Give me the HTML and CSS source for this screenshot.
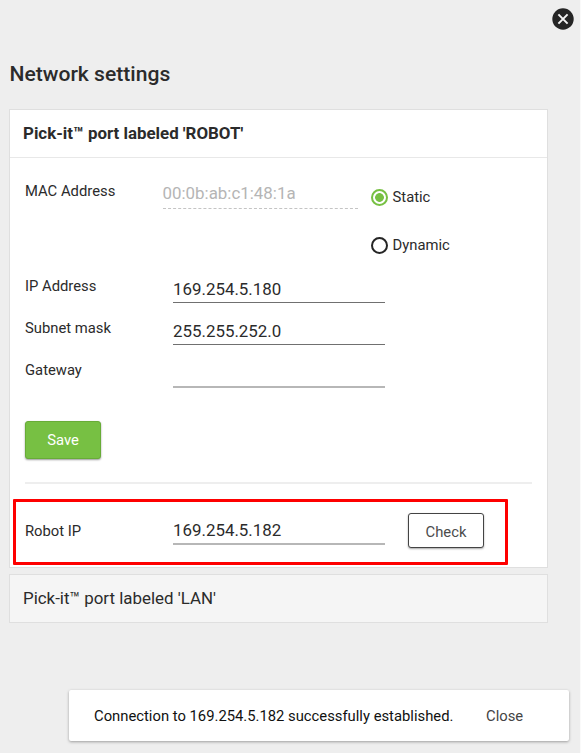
FILE: index.html
```html
<!DOCTYPE html>
<html lang="en">
<head>
<meta charset="utf-8">
<title>Network settings</title>
<link rel="stylesheet" href="styles.css">
</head>
<body>
<header class="topbar">
  <svg class="close-icon" width="22" height="22" viewBox="0 0 22 22" aria-label="Close"><circle cx="11" cy="11" r="10.7" fill="#252525"/><path d="M6.4 6.4l9.2 9.2M15.6 6.4l-9.2 9.2" stroke="#f4f4f4" stroke-width="2"/></svg>
</header>
<main class="page">
  <h1 class="title"><span>Network settings</span></h1>
  <section class="panel">
    <h2 class="panel-head"><span>Pick-it™ port labeled 'ROBOT'</span></h2>
    <div class="panel-body">
      <div class="row mac-row">
        <span class="label mac-label">MAC Address</span>
        <span class="field field-disabled">00:0b:ab:c1:48:1a</span>
        <div class="radios">
          <div class="radio"><span class="dot dot-on"></span><span>Static</span></div>
          <div class="radio"><span class="dot"></span><span>Dynamic</span></div>
        </div>
      </div>
      <div class="row"><span class="label">IP Address</span><span class="field">169.254.5.180</span></div>
      <div class="row"><span class="label">Subnet mask</span><span class="field">255.255.252.0</span></div>
      <div class="row"><span class="label">Gateway</span><span class="field field-soft"></span></div>
      <button class="btn btn-save">Save</button>
      <div class="divider"></div>
      <div class="highlight">
        <span class="label">Robot IP</span><span class="field field-robot">169.254.5.182</span>
        <button class="btn btn-check">Check</button>
      </div>
    </div>
  </section>
  <section class="panel panel-closed">
    <h2 class="panel-head"><span>Pick-it™ port labeled 'LAN'</span></h2>
  </section>
</main>
<div class="toast"><span class="toast-text">Connection to 169.254.5.182 successfully established.</span><span class="toast-close">Close</span></div>
</body>
</html>
```
FILE: styles.css
```css
* { box-sizing: border-box; }
body {
  margin: 0;
  height: 753px;
  overflow: hidden;
  border-right: 1px solid #fafafa;
  background: #eee;
  color: #2b2b2b;
  font-family: Roboto, "Liberation Sans", sans-serif;
  font-size: 14.8px;
}
html { background: #eee; }
.topbar { display: flex; justify-content: flex-end; height: 54px; padding: 8px 6px 0 0; }
.page { padding-left: 9px; width: 548px; }
.title { margin: 0 0 15px 0.5px; font-size: 21.1px; line-height: 40px; font-weight: 500; }
.panel { height: 459px; border: 1px solid #dfdfdf; background: #fff; }
.panel-head {
  margin: 0;
  height: 48px;
  padding-left: 13px;
  border-bottom: 1px solid #e8e8e8;
  font-size: 16.9px;
  line-height: 47px;
  font-weight: 700;
}
.panel-body { padding-top: 15px; }
.row { display: flex; height: 42px; padding-left: 15px; }
.mac-row { height: 95px; }
.label { width: 148px; line-height: 36px; white-space: nowrap; }
.field {
  width: 212px;
  height: 35px;
  border-bottom: 1px solid #707070;
  font-size: 16.9px;
  line-height: 42px;
  white-space: nowrap;
}
.mac-label { width: 137.5px; }
.field-disabled {
  width: 195px;
  height: 36px;
  border-bottom: 1px dashed #c4c4c4;
  color: #b5b5b5;
  line-height: 41px;
}
.field-soft { border-bottom: 2px solid #b7b7b7; height: 36px; }
.radios { margin-left: 13px; }
.radio { display: flex; align-items: center; gap: 5px; height: 48px; }
.dot {
  width: 17px;
  height: 17px;
  border: 2px solid #252525;
  border-radius: 50%;
}
.dot-on { border-color: #77c043; background: radial-gradient(circle, #77c043 4px, #fff 4.7px); }
.btn {
  display: block;
  width: 76px;
  padding: 0;
  border-radius: 3px;
  font: 14.8px Roboto, sans-serif;
}
.btn-save {
  height: 38px;
  margin: 27px 0 0 15px;
  border: 1px solid #68ac37;
  background: #77c043;
  color: #fff;
  box-shadow: 0 1px 2px rgba(0, 0, 0, .4);
}
.divider { height: 2px; margin: 23px 15px 0 15px; background: #eee; }
.highlight {
  display: flex;
  width: 495px;
  height: 66px;
  margin: 15px 0 0 3px;
  padding: 11px 0 0 9px;
  border: 3px solid #fe0000;
  border-radius: 1px;
}
.field-robot { height: 32px; border-bottom: 2px solid #b7b7b7; line-height: 35px; }
.btn-check {
  height: 35px;
  margin-left: 23px;
  padding-top: 3px;
  border: 1px solid #444;
  background: #fff;
  color: #4c4c4c;
  box-shadow: 0 1px 2px rgba(0, 0, 0, .35);
}
.panel-closed { height: 49px; margin-top: 6px; background: #f5f5f5; }
.panel-closed .panel-head { border: 0; font-weight: 400; }
.toast {
  position: absolute;
  left: 69px;
  top: 690px;
  display: flex;
  width: 500px;
  height: 51px;
  padding-left: 25px;
  border-radius: 2px;
  background: #fff;
  line-height: 52px;
  color: #111;
  white-space: nowrap;
  box-shadow: 0 1px 3px rgba(0, 0, 0, .35);
}
.toast-text { width: 392px; }
.toast-close { color: #444; }
```
